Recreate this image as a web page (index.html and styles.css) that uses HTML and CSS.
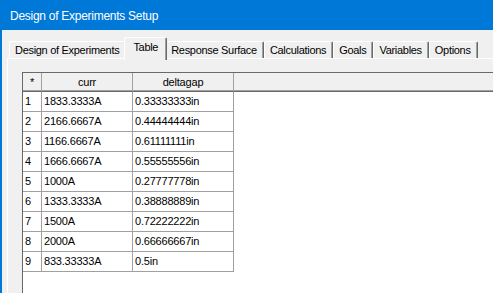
FILE: index.html
```html
<!DOCTYPE html>
<html lang="en">
<head>
    <meta charset="UTF-8">
    <title>Design of Experiments Setup</title>
    <link rel="stylesheet" href="styles.css">
</head>
<body>
    <div class="titlebar">Design of Experiments Setup</div>

    <div class="client">
        <!-- Tab strip -->
        <div class="tabs">
            <div class="tab">Design of Experiments</div>
            <div class="tab active">Table</div>
            <div class="tab">Response Surface</div>
            <div class="tab">Calculations</div>
            <div class="tab">Goals</div>
            <div class="tab">Variables</div>
            <div class="tab">Options</div>
        </div>

        <div class="panel">
            <div class="grid">
                <table>
                    <thead>
                        <tr>
                            <th class="col-row">*</th>
                            <th class="col-curr">curr</th>
                            <th class="col-gap">deltagap</th>
                            <th class="filler"></th>
                        </tr>
                    </thead>
                    <tbody>
                        <tr><td>1</td><td>1833.3333A</td><td>0.33333333in</td><td class="empty"></td></tr>
                        <tr><td>2</td><td>2166.6667A</td><td>0.44444444in</td><td class="empty"></td></tr>
                        <tr><td>3</td><td>1166.6667A</td><td>0.61111111in</td><td class="empty"></td></tr>
                        <tr><td>4</td><td>1666.6667A</td><td>0.55555556in</td><td class="empty"></td></tr>
                        <tr><td>5</td><td>1000A</td><td>0.27777778in</td><td class="empty"></td></tr>
                        <tr><td>6</td><td>1333.3333A</td><td>0.38888889in</td><td class="empty"></td></tr>
                        <tr><td>7</td><td>1500A</td><td>0.72222222in</td><td class="empty"></td></tr>
                        <tr><td>8</td><td>2000A</td><td>0.66666667in</td><td class="empty"></td></tr>
                        <tr><td>9</td><td>833.33333A</td><td>0.5in</td><td class="empty"></td></tr>
                    </tbody>
                </table>
            </div>
        </div>
    </div>
</body>
</html>
```

FILE: styles.css
```css
body {
    margin: 0;
    width: 493px;
    height: 293px;
    overflow: hidden;
    display: flex;
    flex-direction: column;
    background-color: #f0f0f0;
    font-family: "Liberation Sans", Arial, sans-serif;
    color: #000;
}

.titlebar {
    height: 30px;
    flex-shrink: 0;
    box-sizing: border-box;
    padding: 3px 0 0 10px;
    line-height: 27px;
    background-color: #0078d7;
    color: white;
    font-size: 12px;
    letter-spacing: -0.27px;
}

.client {
    flex: 1;
    display: flex;
    flex-direction: column;
    border-left: 2px solid #0078d7;
    padding: 7px 0 0 5px;
}

/* tabs */
.tabs {
    display: flex;
    align-items: flex-end;
    height: 21px;
    flex-shrink: 0;
    padding-left: 2px;
    position: relative;
    z-index: 1;
}

.tab {
    height: 17px;
    box-sizing: border-box;
    padding: 1px 6px 0 5px;
    line-height: 14px;
    font-size: 11px;
    letter-spacing: -0.3px;
    white-space: nowrap;
    background-color: #f0f0f0;
    border-top: 1px solid #fff;
    border-left: 1px solid #fff;
    border-right: 1px solid #696969;
    border-radius: 2px 2px 0 0;
    box-shadow: inset -1px 0 #a0a0a0;
}

.tab.active {
    height: 23px;
    margin: 0 -2px -2px -2px;
    padding: 2px 8px 0 8px;
    position: relative;
    z-index: 2;
}

/* tab page */
.panel {
    flex: 1;
    display: flex;
    border-top: 1px solid #fff;
    border-left: 1px solid #fff;
    padding: 13px 0 0 14px;
}

.grid {
    flex: 1;
    background-color: white;
    border-top: 1px solid #696969;
    border-left: 1px solid #696969;
}

table {
    width: 100%;
    border-collapse: separate;
    border-spacing: 0;
    table-layout: fixed;
    font-size: 11px;
    letter-spacing: -0.2px;
}

th, td {
    box-sizing: border-box;
    padding: 0;
    white-space: nowrap;
    overflow: hidden;
}

th {
    height: 19px;
    line-height: 17px;
    font-weight: normal;
    text-align: center;
    background-color: #f0f0f0;
    border-right: 1px solid #a0a0a0;
    border-bottom: 1px solid #696969;
    box-shadow: inset 0 -1px #a0a0a0;
}

.col-row {
    width: 19px;
}

.col-curr {
    width: 91px;
}

.col-gap {
    width: 101px;
}

th.filler {
    border-right: none;
}

td {
    height: 20px;
    line-height: 19px;
    padding-left: 2px;
    border-right: 1px solid #a0a0a0;
    border-bottom: 1px solid #a0a0a0;
}

td.empty {
    border: none;
}
```
